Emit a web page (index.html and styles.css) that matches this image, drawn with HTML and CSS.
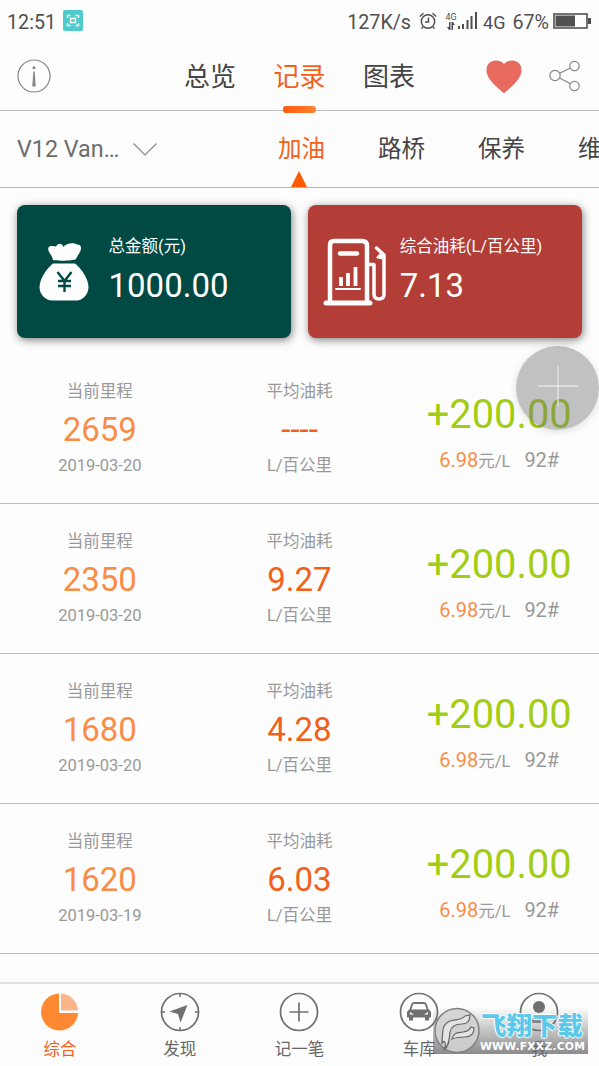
FILE: index.html
```html
<!DOCTYPE html>
<html lang="zh-CN">
<head>
    <meta charset="UTF-8">
    <meta name="viewport" content="width=device-width, initial-scale=1.0">
    <title>加油记录</title>
    <link rel="stylesheet" href="styles.css">
</head>
<body>
    <div class="app">
        <div class="status-bar">
            <span>12:51</span>
            <svg class="scan-icon" width="20" height="21" viewBox="0 0 20 21">
                <rect width="20" height="21" rx="2" fill="#50cbcc"/>
                <path d="M4.500 8V5.500H7.500M12.500 5.500H15.500V8M15.500 13V15.500H12.500M7.500 15.500H4.500V13M7.500 8.500H12.500V12.500H7.500Z" fill="none" stroke="#fff" stroke-width="1.300"/>
            </svg>
            <div class="status-right">
                <span class="speed">127K/s</span>
                <svg class="alarm-icon" width="18" height="18" viewBox="0 0 18 18" fill="none" stroke="#505050" stroke-width="1.500">
                    <circle cx="9" cy="9.500" r="6.700"/>
                    <path d="M9.500 5.500V10H6M1 4.500L4.500 1.300M17 4.500L13.500 1.300M4 15L2.500 16.500M14 15L15.500 16.500"/>
                </svg>
                <div class="mini-net">
                    <span>4G</span>
                    <svg width="8" height="8" viewBox="0 0 8 8" fill="#505050"><path d="M2 0H3.500V8H2L0 5H2ZM4.500 0H6L8 3H6V8H4.500Z"/></svg>
                </div>
                <svg class="signal-icon" width="20" height="18" viewBox="0 0 20 18" fill="#505050">
                    <path d="M0 14H2V17H0ZM4 12H6V17H4ZM8.500 8H10.500V17H8.500ZM12.500 4H14.500V17H12.500ZM17 0H19V17H17Z"/>
                </svg>
                <span class="net">4G</span>
                <span class="percent">67%</span>
                <svg class="battery-icon" width="38" height="16" viewBox="0 0 38 16">
                    <rect x="1" y="1" width="33" height="14" fill="none" stroke="#505050" stroke-width="1.600"/>
                    <path d="M2.500 2.500H22V13.500H2.500ZM35 5H38V11H35Z" fill="#505050"/>
                </svg>
            </div>
        </div>

        <div class="header">
            <svg class="info-icon" width="34" height="34" viewBox="0 0 34 34">
                <circle cx="17" cy="17" r="16" fill="none" stroke="#858585" stroke-width="1.200"/>
                <circle cx="17" cy="8.800" r="1.500" fill="#858585"/>
                <path d="M16.300 12.500H17.700L18.700 27.500H15.300Z" fill="#858585"/>
            </svg>
            <div class="tabs">
                <span class="tab">总览</span>
                <span class="tab active">记录</span>
                <span class="tab">图表</span>
            </div>
            <svg class="heart-icon" width="36" height="34" viewBox="0 0 36 34">
                <path d="M18 33.500C14 29 0.500 20.500 0.500 10C0.500 4 5 0.500 9.500 0.500C13.500 0.500 16.500 2 18 4C19.500 2 22.500 0.500 26.500 0.500C31 0.500 35.500 4 35.500 10C35.500 20.500 22 29 18 33.500Z" fill="#e86a5f"/>
            </svg>
            <svg class="share-icon" width="32" height="32" viewBox="0 0 32 32" fill="none" stroke="#858585" stroke-width="1.200">
                <circle cx="6" cy="15.500" r="5.200"/>
                <circle cx="25.500" cy="6" r="4.700"/>
                <circle cx="25.500" cy="26" r="4.700"/>
                <path d="M10.700 13.200L21.300 8M10.500 18L21.300 23.700"/>
            </svg>
        </div>

        <div class="sub-bar">
            <span class="car-name">V12 Van…</span>
            <svg class="chevron" width="24" height="13" viewBox="0 0 24 13" fill="none" stroke="#858585" stroke-width="1.100"><path d="M0.500 0.500L12 12L23.500 0.500"/></svg>
            <div class="categories">
                <span class="category active">加油</span>
                <span class="category">路桥</span>
                <span class="category">保养</span>
                <span class="category">维修</span>
            </div>
        </div>

        <div class="cards">
            <div class="card green">
                <svg class="bag-icon" width="50" height="58" viewBox="0 0 50 58" fill="#fff">
                    <path d="M14 17C13 11 8 9 9.500 4.500C11 2 15 3 17 3.500C19 -0.500 23 0 24.500 4C27 0 35 -0.500 38 1.500C43 1.500 42.500 6 41 9C39 12 38 14 37 16C35 18 16 18 14 17Z"/>
                    <path d="M14 20.500H36C42 25 49.500 36 49.500 44C49.500 52 43 57.500 38 57.500H13C7 57.500 0.500 52 0.500 44C0.500 36 8 25 14 20.500Z"/>
                    <path d="M18.500 29L25.500 38L32.500 29M25.500 37V49M19 38H32M19 43H32" fill="none" stroke="#004a43" stroke-width="2.400"/>
                </svg>
                <div class="card-text">
                    <span class="card-label">总金额(元)</span>
                    <span class="card-value">1000.00</span>
                </div>
            </div>
            <div class="card red">
                <svg class="pump-icon" width="64" height="68" viewBox="0 0 64 68" fill="none" stroke="#fff" stroke-width="4.500" stroke-linecap="round" stroke-linejoin="round">
                    <path d="M7 63V7Q7 3 11 3H39Q44 3 44 8V63"/>
                    <path d="M3 65H47" stroke-width="5"/>
                    <path d="M17 15.500H34"/>
                    <path d="M18 39V48M25 35V48M32.500 29V48" stroke-width="3.800" stroke-linecap="butt"/>
                    <path d="M13 51H37" stroke-width="2"/>
                    <path d="M45 26.500H51V56Q51 61 56 61Q61 61 61 56V17L53.500 10" stroke-width="3.500"/>
                    <path d="M59 14L54 19.500L61 21Z" fill="#fff" stroke-width="1.500"/>
                </svg>
                <div class="card-text">
                    <span class="card-label">综合油耗(L/百公里)</span>
                    <span class="card-value">7.13</span>
                </div>
            </div>
        </div>

        <div class="list">
            <div class="record">
                <div class="col">
                    <span class="label">当前里程</span>
                    <span class="value mileage">2659</span>
                    <span class="note">2019-03-20</span>
                </div>
                <div class="col">
                    <span class="label">平均油耗</span>
                    <span class="value fuel">----</span>
                    <span class="note">L/百公里</span>
                </div>
                <div class="col cost">
                    <span class="amount">+200.00</span>
                    <span class="price"><b>6.98</b><small>元/L</small><i>92#</i></span>
                </div>
            </div>
            <div class="record">
                <div class="col">
                    <span class="label">当前里程</span>
                    <span class="value mileage">2350</span>
                    <span class="note">2019-03-20</span>
                </div>
                <div class="col">
                    <span class="label">平均油耗</span>
                    <span class="value fuel">9.27</span>
                    <span class="note">L/百公里</span>
                </div>
                <div class="col cost">
                    <span class="amount">+200.00</span>
                    <span class="price"><b>6.98</b><small>元/L</small><i>92#</i></span>
                </div>
            </div>
            <div class="record">
                <div class="col">
                    <span class="label">当前里程</span>
                    <span class="value mileage">1680</span>
                    <span class="note">2019-03-20</span>
                </div>
                <div class="col">
                    <span class="label">平均油耗</span>
                    <span class="value fuel">4.28</span>
                    <span class="note">L/百公里</span>
                </div>
                <div class="col cost">
                    <span class="amount">+200.00</span>
                    <span class="price"><b>6.98</b><small>元/L</small><i>92#</i></span>
                </div>
            </div>
            <div class="record">
                <div class="col">
                    <span class="label">当前里程</span>
                    <span class="value mileage">1620</span>
                    <span class="note">2019-03-19</span>
                </div>
                <div class="col">
                    <span class="label">平均油耗</span>
                    <span class="value fuel">6.03</span>
                    <span class="note">L/百公里</span>
                </div>
                <div class="col cost">
                    <span class="amount">+200.00</span>
                    <span class="price"><b>6.98</b><small>元/L</small><i>92#</i></span>
                </div>
            </div>
        </div>

        <div class="bottom-nav">
            <div class="nav-item active">
                <svg width="40" height="40" viewBox="0 0 40 40">
                    <path d="M19 1.500A18.500 18.500 0 1 0 38 21H19Z" fill="#ff8833"/>
                    <path d="M21 1.500A18 18 0 0 1 38 18.500H21Z" fill="#fbb588"/>
                </svg>
                <span>综合</span>
            </div>
            <div class="nav-item">
                <svg width="40" height="40" viewBox="0 0 40 40">
                    <path d="M20 1V5M20 35V39M1 20H5M35 20H39" stroke="#707070" stroke-width="1.500"/>
                    <circle cx="20" cy="20" r="18.500" fill="none" stroke="#707070" stroke-width="1.700"/>
                    <path d="M27.500 13L20.500 30.500L18 22L9.500 19.500Z" fill="#707070"/>
                </svg>
                <span>发现</span>
            </div>
            <div class="nav-item">
                <svg width="40" height="40" viewBox="0 0 40 40" fill="none" stroke="#707070" stroke-width="1.700">
                    <circle cx="20" cy="20" r="18.500"/>
                    <path d="M20 10.500V29.500M10.500 20H29.500"/>
                </svg>
                <span>记一笔</span>
            </div>
            <div class="nav-item">
                <svg width="40" height="40" viewBox="0 0 40 40">
                    <circle cx="20" cy="20" r="18.500" fill="none" stroke="#707070" stroke-width="1.700"/>
                    <path d="M11 19L13 12.500Q13.500 11 15.500 11H24.500Q26.500 11 27 12.500L29 19" fill="none" stroke="#707070" stroke-width="1.800"/>
                    <path fill-rule="evenodd" d="M10 17.500H30L32 20V25.500H30V28.500H26V25.500H14V28.500H10V25.500H8V20ZM11 20V22.500H15ZM29 20L25 22.500H29Z" fill="#707070"/>
                </svg>
                <span>车库</span>
            </div>
            <div class="nav-item">
                <svg width="40" height="40" viewBox="0 0 40 40">
                    <circle cx="20" cy="20" r="18.500" fill="none" stroke="#707070" stroke-width="1.700"/>
                    <circle cx="20" cy="15" r="6" fill="#707070"/>
                    <path d="M10 31Q11 24 20 24Q29 24 30 31Z" fill="#909090"/>
                </svg>
                <span>我</span>
            </div>
        </div>

        <div class="add-button">
            <svg width="40" height="40" viewBox="0 0 40 40" stroke="#e6e6e6" stroke-width="1.300"><path d="M20 0V40M0 20H40"/></svg>
        </div>

        <div class="watermark">
            <svg class="mark-logo" width="47" height="47" viewBox="0 0 47 47">
                <circle cx="24" cy="23.500" r="22" fill="#d2d2d2" fill-opacity=".9" stroke="#808080" stroke-width="1.500"/>
                <path d="M9 37C10 25 8 18 17 14C23 12 28 14 32 9L37 8C37 14 34 17 29 17C22 17 18 19 17 25C16 31 17 38 11 43C14 36 11 31 9 37Z" fill="#e4e4e4" stroke="#686868" stroke-width="1.200"/>
                <path d="M19 32C21 25 25 26 30 25C34 24.500 37 23 38 20L41 21C41 27 38 30 32 30C28 30 24 30 19 32Z" fill="#e4e4e4" stroke="#686868" stroke-width="1.200"/>
            </svg>
            <div class="mark-text">
                <span class="mark-name">飞翔下载</span>
                <span class="mark-url">WWW.FXXZ.COM</span>
            </div>
        </div>
    </div>
</body>
</html>
```
FILE: styles.css
```css
* {
    box-sizing: border-box;
}
body {
    margin: 0;
    font-family: Roboto, 'Noto Sans CJK SC', sans-serif;
    background: #fdfdfd;
    color: #444;
}
svg {
    display: block;
    flex-shrink: 0;
}
.app {
    position: relative;
    width: 599px;
    height: 1066px;
    overflow: hidden;
    display: flex;
    flex-direction: column;
}
.status-bar {
    height: 42px;
    padding: 2px 7px 0;
    display: flex;
    align-items: center;
    font-size: 19.7px;
    color: #505050;
}
.scan-icon {
    margin-left: 7px;
    margin-top: -3px;
}
.status-right {
    margin-left: auto;
    display: flex;
    align-items: center;
}
.speed {
    font-size: 19.7px;
}
.alarm-icon {
    margin-left: 8px;
    margin-top: -3px;
}
.mini-net {
    width: 12px;
    margin-left: 8px;
    margin-top: -3px;
    display: flex;
    flex-direction: column;
    align-items: center;
    font-size: 9px;
    line-height: 10px;
}
.signal-icon {
    margin-left: 1px;
    margin-top: -2px;
}
.net {
    margin-left: 5px;
    font-size: 18px;
}
.percent {
    margin: 0 4px 0 7px;
}
.battery-icon {
    margin: -3px 1px 0 0;
}
.header {
    height: 69px;
    padding: 0 18px 0 17px;
    display: flex;
    align-items: center;
    border-bottom: 1px solid #bdbdbd;
}
.tabs {
    display: flex;
    gap: 37.5px;
    margin-left: 133px;
    font-size: 26px;
}
.tab {
    position: relative;
    line-height: 68px;
    padding-top: 1px;
}
.active {
    color: #f2601a;
}
.tab.active::after {
    content: "";
    position: absolute;
    left: 9px;
    bottom: -2px;
    width: 33px;
    height: 7px;
    border-radius: 3px;
    background: linear-gradient(to right, #ff5a0a, #ff8433);
}
.heart-icon {
    margin-left: auto;
    margin-top: 1px;
}
.share-icon {
    margin-left: 27px;
}
.sub-bar {
    height: 77px;
    padding-left: 17px;
    display: flex;
    align-items: center;
    border-bottom: 1px solid #b5b5b5;
}
.car-name {
    width: 103px;
    flex-shrink: 0;
    font-size: 23.3px;
    color: #6c6c6c;
    white-space: nowrap;
}
.chevron {
    margin-left: 13px;
}
.categories {
    display: flex;
    gap: 53px;
    margin-left: 121px;
    font-size: 23.5px;
    white-space: nowrap;
}
.category {
    position: relative;
    line-height: 76px;
}
.category.active::after {
    content: "";
    position: absolute;
    left: 13px;
    bottom: 0;
    border: 8px solid transparent;
    border-top: 0;
    border-bottom: 16px solid #ff5a00;
}
.cards {
    display: flex;
    gap: 17px;
    padding: 17px 17px 16px 16.5px;
}
.card {
    flex: 1;
    height: 133px;
    display: flex;
    align-items: center;
    border-radius: 8px;
    color: #fff;
    box-shadow: 1px 2px 8px rgba(0, 0, 0, 0.5);
}
.green {
    background: #004a43;
}
.red {
    background: #b23e37;
}
.bag-icon {
    margin: 0 20px 0 22px;
}
.pump-icon {
    margin: 0 13px 0 15px;
}
.card-text {
    display: flex;
    flex-direction: column;
}
.card-label {
    font-size: 16.5px;
    line-height: 28px;
}
.card-value {
    font-size: 33px;
    line-height: 50px;
}
.record {
    height: 150px;
    padding-top: 26px;
    display: flex;
    border-bottom: 1px solid #bdbdbd;
}
.col {
    flex: 1;
    display: flex;
    flex-direction: column;
    align-items: center;
}
.label {
    font-size: 16.5px;
    line-height: 24px;
    color: #999;
}
.value {
    font-size: 33px;
    line-height: 52px;
}
.mileage {
    color: #f98d45;
}
.fuel {
    color: #f2601a;
}
.note {
    font-size: 16.5px;
    line-height: 20px;
    color: #999;
}
.amount {
    font-size: 39.8px;
    line-height: 70px;
    color: #a3cd14;
}
.price {
    font-size: 20px;
    line-height: 20px;
    color: #999;
}
.price b {
    font-weight: normal;
    color: #f98d45;
}
.price small {
    font-size: 16.5px;
}
.price i {
    font-style: normal;
    margin-left: 14px;
}
.bottom-nav {
    margin-top: auto;
    height: 84px;
    padding-top: 8px;
    display: flex;
    border-top: 2px solid #e0e0e0;
}
.nav-item {
    flex: 1;
    display: flex;
    flex-direction: column;
    align-items: center;
    font-size: 16.5px;
    color: #666;
}
.nav-item span {
    line-height: 36px;
}
.nav-item.active {
    color: #f2601a;
}
.add-button {
    position: absolute;
    left: 516px;
    top: 346px;
    width: 83px;
    height: 84px;
    padding-bottom: 4px;
    display: flex;
    align-items: center;
    justify-content: center;
    border-radius: 50%;
    background: rgba(110, 110, 110, 0.42);
    box-shadow: 0 2px 8px rgba(0, 0, 0, 0.12);
}
.watermark {
    position: absolute;
    left: 433px;
    top: 1007px;
    width: 155px;
    height: 47px;
    display: flex;
    background: linear-gradient(to bottom, rgba(110, 110, 110, 0), rgba(110, 110, 110, 0.8));
}
.mark-text {
    display: flex;
    flex-direction: column;
    white-space: nowrap;
}
.mark-name {
    margin-left: 1px;
    font-size: 25.5px;
    line-height: 38px;
    margin-bottom: -4px;
    font-weight: 900;
    color: #5cc8ea;
    text-shadow: 1px 0 #fff, -1px 0 #fff, 0 1px #fff, 0 -1px #fff;
}
.mark-url {
    font-family: 'DejaVu Sans', sans-serif;
    font-size: 10.8px;
    line-height: 11px;
    font-weight: bold;
    letter-spacing: 0.2px;
    color: #fff;
}
```
